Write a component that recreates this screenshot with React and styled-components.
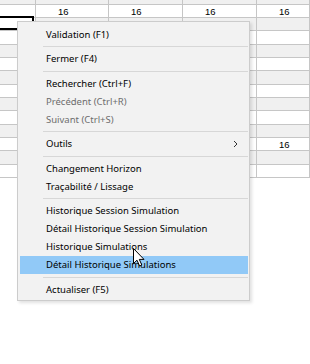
import React from "react";
import styled, { createGlobalStyle } from "styled-components";

const GlobalStyle = createGlobalStyle`
  html, body {
    margin: 0;
    padding: 0;
    background: #fff;
    overflow: hidden;
  }
  body {
    width: 310px;
    height: 364px;
    position: relative;
  }
`;

const COL_WIDTHS = [36, 73, 74, 74, 53];
const ROW_HEIGHTS = [13, 13, 14, 13, 13, 14, 13, 13, 14, 13, 13, 14, 13];

const ROW_VALUES = {
  0: ["", "16", "16", "16", "16"],
  1: ["", "16", "", "", ""],
  10: ["", "", "", "", "16"],
};

const MENU = [
  { label: "Validation (F1)" },
  { sep: true },
  { label: "Fermer (F4)" },
  { sep: true },
  { label: "Rechercher (Ctrl+F)" },
  { label: "Précédent (Ctrl+R)", disabled: true },
  { label: "Suivant (Ctrl+S)", disabled: true },
  { sep: true },
  { label: "Outils", submenu: true },
  { sep: true },
  { label: "Changement Horizon" },
  { label: "Traçabilité / Lissage" },
  { sep: true },
  { label: "Historique Session Simulation" },
  { label: "Détail Historique Session Simulation" },
  { label: "Historique Simulations" },
  { label: "Détail Historique Simulations", active: true },
  { sep: true },
  { label: "Actualiser (F5)" },
];

const Sheet = styled.div`
  width: 310px;
  overflow: hidden;
  display: flex;
  flex-direction: column;
`;

const Row = styled.div`
  display: flex;
  height: ${(p) => p.$h}px;
  box-sizing: border-box;
  border-bottom: 1px solid #c6c6c6;
  background: ${(p) => (p.$alt ? "#f0f0f0" : "#ffffff")};
`;

const Cell = styled.div`
  position: relative;
  flex: 0 0 ${(p) => p.$w}px;
  box-sizing: border-box;
  border-right: 1px solid #c6c6c6;
  display: flex;
  align-items: center;
  padding-left: 22px;
  font-family: "Liberation Sans", Arial, sans-serif;
  font-size: 9.5px;
  color: #000;
  background: ${(p) => (p.$selected ? "#fff" : "transparent")};

  ${(p) =>
    p.$selected &&
    `
    &::after {
      content: "";
      position: absolute;
      top: -2px;
      left: -3px;
      right: 1px;
      bottom: 0;
      border: 2px solid #000;
    }
  `}
`;

const Menu = styled.div`
  position: absolute;
  left: 17px;
  top: 21px;
  width: 233px;
  box-sizing: border-box;
  background: #f2f2f2;
  border: 1px solid #cccccc;
  box-shadow: 2px 2px 3px rgba(0, 0, 0, 0.12);
  padding: 3px 1px 1.5px 2px;
  font-family: "Noto Sans", "Open Sans", sans-serif;
  font-size: 9.5px;
`;

const Item = styled.div`
  height: 18px;
  display: flex;
  align-items: center;
  padding-left: 26px;
  padding-right: 10px;
  color: ${(p) => (p.$disabled ? "#6d6d6d" : "#000")};
  background: ${(p) => (p.$active ? "#91c9f7" : "transparent")};
`;

const Label = styled.span`
  flex: 1;
  white-space: nowrap;
`;

const Separator = styled.div`
  height: 1px;
  margin: 3px 0 2.5px 23px;
  background: #d7d7d7;
`;

const Chevron = () => (
  <svg width="5" height="8" viewBox="0 0 5 8">
    <path d="M1 1 L4 4 L1 7" fill="none" stroke="#333" strokeWidth="1" />
  </svg>
);

const Cursor = styled.svg`
  position: absolute;
  left: 133px;
  top: 248px;
`;

export default function App() {
  return (
    <>
      <GlobalStyle />
      <Sheet>
        <Row $h={5} $alt>
          {COL_WIDTHS.map((w, i) => (
            <Cell key={i} $w={w} />
          ))}
        </Row>
        {ROW_HEIGHTS.map((h, r) => {
          const values = ROW_VALUES[r] || [];
          return (
            <Row key={r} $h={h} $alt={r % 2 === 1}>
              {COL_WIDTHS.map((w, c) => (
                <Cell key={c} $w={w} $selected={r === 1 && c === 0}>
                  {values[c]}
                </Cell>
              ))}
            </Row>
          );
        })}
      </Sheet>

      <Menu>
        {MENU.map((m, i) =>
          m.sep ? (
            <Separator key={i} />
          ) : (
            <Item key={i} $disabled={m.disabled} $active={m.active}>
              <Label>{m.label}</Label>
              {m.submenu && <Chevron />}
            </Item>
          )
        )}
      </Menu>

      <Cursor width="12" height="19" viewBox="0 0 12 19">
        <path
          d="M0.5 0.5 L0.5 15.5 L4 12.2 L6.6 18 L8.8 17 L6.3 11.4 L11 11.4 Z"
          fill="#fff"
          stroke="#000"
          strokeWidth="1"
          strokeLinejoin="round"
        />
      </Cursor>
    </>
  );
}
